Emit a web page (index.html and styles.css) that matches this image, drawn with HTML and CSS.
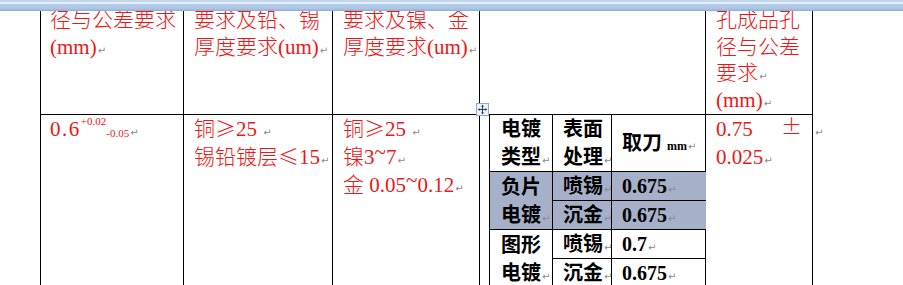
FILE: index.html
```html
<!DOCTYPE html>
<html lang="zh-CN">
<head>
<meta charset="utf-8">
<title>电镀要求表</title>
<link rel="stylesheet" href="styles.css">
</head>
<body>
<div class="ruler"></div>
<table class="doc">
  <colgroup>
    <col class="w1"><col class="w2"><col class="w3"><col class="w4"><col class="w5"><col class="w6">
  </colgroup>
  <tr class="head">
    <td class="first">径与公差要求<br>(mm)<span class="pm">↵</span></td>
    <td>要求及铅、锡<br>厚度要求(um)<span class="pm">↵</span></td>
    <td>要求及镍、金<br>厚度要求(um)<span class="pm">↵</span></td>
    <td></td>
    <td>孔成品孔<br>径与公差<br>要求<span class="pm">↵</span><br>(mm)<span class="pm">↵</span></td>
    <td class="rowend"></td>
  </tr>
  <tr class="body">
    <td class="first"><span class="num">0.6</span><span class="sup">+0.02</span><span class="sub">-0.05</span><span class="pm">↵</span></td>
    <td>铜<span class="fw">≥</span>25 <span class="pm">↵</span><br>锡铅镀层<span class="fw">≤</span>15<span class="pm">↵</span></td>
    <td>铜<span class="fw">≥</span>25 <span class="pm">↵</span><br>镍3<span class="tilde">~</span>7<span class="pm">↵</span><br>金 0.05<span class="tilde">~</span>0.12<span class="pm">↵</span></td>
    <td class="nested">
      <span class="move-handle"><svg width="13" height="13" viewBox="0 0 13 13"><rect x="0.5" y="0.5" width="12" height="12" fill="#eef2f8" stroke="#9aa9bf"/><path d="M6.5 2.5v8M2.5 6.5h8" stroke="#1f3f73" stroke-width="1"/><path d="M6.5 1.8l-1.6 1.8h3.2zM6.5 11.2l-1.6-1.8h3.2zM1.8 6.5l1.8-1.6v3.2zM11.2 6.5l-1.8-1.6v3.2z" fill="#1f3f73"/></svg></span>
      <table class="plating">
        <colgroup><col class="p1"><col class="p2"><col class="p3"></colgroup>
        <tr class="ph">
          <td class="pc1">电镀<br>类型<span class="pm">↵</span></td>
          <td>表面<br>处理<span class="pm">↵</span></td>
          <td>取刀 <span class="unit">mm</span><span class="pm">↵</span></td>
        </tr>
        <tr class="sel">
          <td class="pc1" rowspan="2">负片<br>电镀<span class="pm">↵</span></td>
          <td>喷锡<span class="pm">↵</span></td>
          <td>0.675<span class="pm">↵</span></td>
        </tr>
        <tr class="sel">
          <td>沉金<span class="pm">↵</span></td>
          <td>0.675<span class="pm">↵</span></td>
        </tr>
        <tr>
          <td class="pc1" rowspan="2">图形<br>电镀<span class="pm">↵</span></td>
          <td>喷锡<span class="pm">↵</span></td>
          <td>0.7<span class="pm">↵</span></td>
        </tr>
        <tr>
          <td>沉金<span class="pm">↵</span></td>
          <td>0.675<span class="pm">↵</span></td>
        </tr>
      </table>
    </td>
    <td>
      <div class="spread"><span>0.75</span><span class="fw">±</span></div>
      0.025<span class="pm">↵</span>
    </td>
    <td class="rowend"><span class="pm">↵</span></td>
  </tr>
</table>
</body>
</html>
```

FILE: styles.css
```css
html, body {
  margin: 0;
  padding: 0;
  width: 903px;
  height: 285px;
  overflow: hidden;
  background: #ffffff;
}

body {
  position: relative;
  font-family: "Liberation Serif", "Noto Sans CJK SC", serif;
}

.ruler {
  position: absolute;
  top: 0;
  left: 0;
  width: 903px;
  height: 11px;
  z-index: 5;
  background: linear-gradient(to bottom,
    #c2d7ee 0px, #c2d7ee 2px,
    #e4effa 2px, #e4effa 4px,
    #b4cde9 4px, #a9c5e5 9px,
    #94b3d8 10px, #94b3d8 11px);
}

.doc {
  border-collapse: collapse;
  table-layout: fixed;
  margin-left: 40px;
  width: 795px;
  color: #ee1616;
  font-size: 21px;
  font-weight: 300;
}

.w1 { width: 143px; }
.w2 { width: 149px; }
.w3 { width: 147px; }
.w4 { width: 226px; }
.w5 { width: 107px; }
.w6 { width: 23px; }

.doc > tbody > tr > td {
  border: 1px solid #000;
  vertical-align: top;
  padding: 0 10px;
  white-space: nowrap;
}

.doc > tbody > tr > td.first {
  padding-left: 9px;
}

.doc > tbody > tr.head > td {
  border-top: none;
  height: 107px;
  padding-top: 7px;
  line-height: 26.5px;
}

.doc > tbody > tr.body > td {
  height: 200px;
  line-height: 28px;
}

.doc > tbody > tr > td.rowend {
  border: none;
  padding: 0 0 0 1px;
}

.doc > tbody > tr > td.nested {
  position: relative;
  padding: 0 0 0 9px;
}

.pm {
  font-family: "DejaVu Sans", sans-serif;
  font-size: 10px;
  line-height: 1;
  font-weight: 400;
  color: #8a8a8a;
  margin-left: 1px;
}

.fw {
  font-family: "Noto Sans CJK SC", sans-serif;
  line-height: 1;
}

.num {
  letter-spacing: 1.5px;
}

.tilde {
  line-height: 0;
  vertical-align: 5px;
}

.sup, .sub {
  font-size: 11px;
  line-height: 0;
}

.sup { vertical-align: 11px; }
.sub { vertical-align: -1px; }

.spread {
  display: flex;
  justify-content: space-between;
}

.move-handle {
  position: absolute;
  left: -4px;
  top: -12px;
  width: 13px;
  height: 13px;
  line-height: 0;
  z-index: 3;
}

.plating {
  border-collapse: collapse;
  table-layout: fixed;
  width: 216px;
  color: #000;
  font-family: "Liberation Serif", "Noto Sans CJK SC", serif;
  font-size: 20px;
  font-weight: 700;
  line-height: 28px;
}

.p1 { width: 63px; }
.p2 { width: 59px; }
.p3 { width: 94px; }

.plating td {
  border: 1px solid #000;
  border-top: none;
  padding: 0 0 0 10px;
  vertical-align: middle;
  white-space: nowrap;
}

.plating tr + tr td {
  border-top: 1px solid #000;
}

.plating td:last-child {
  border-right: none;
}

.plating td.pc1 {
  padding-left: 11px;
}

.plating tr.ph td {
  height: 56px;
}

.plating tr:not(.ph) td {
  height: 28px;
}

.plating tr.sel td {
  background: #a7b0c9;
}

.unit {
  font-size: 12px;
  line-height: 1;
}
```
